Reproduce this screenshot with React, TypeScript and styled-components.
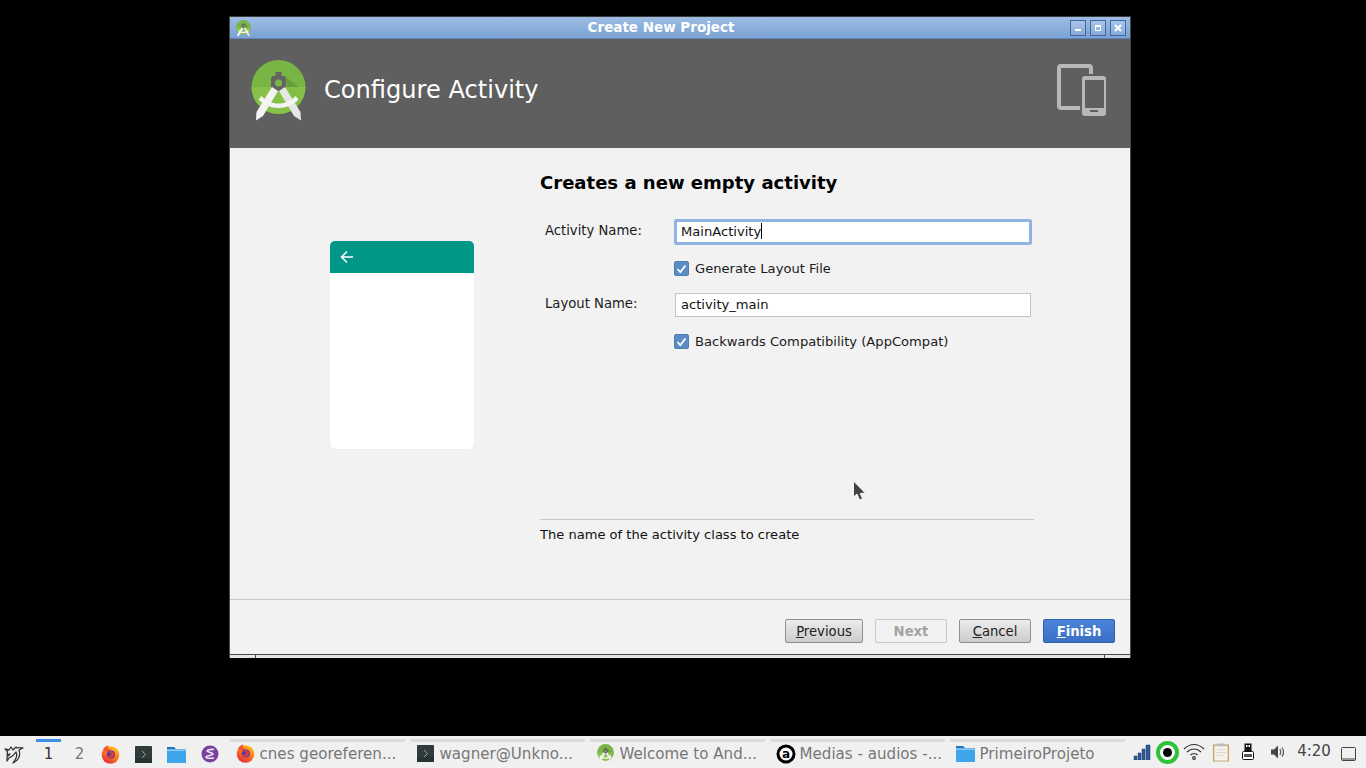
import React from 'react';
import styled, { createGlobalStyle } from 'styled-components';

const GlobalStyle = createGlobalStyle`
  html, body {
    margin: 0;
    padding: 0;
    height: 100%;
    background: #000;
    overflow: hidden;
    font-family: 'DejaVu Sans', sans-serif;
  }
  #root { height: 100%; }
`;

const Screen = styled.div`
  width: 1366px;
  height: 768px;
  display: flex;
  flex-direction: column;
  position: relative;
`;

const Desktop = styled.div`
  flex: 1;
  padding: 16px 0 0 229px;
`;

const Window = styled.div`
  width: 902px;
  height: 642px;
  box-sizing: border-box;
  display: flex;
  flex-direction: column;
  background: #f2f2f2;
  border-left: 1px solid #4a4a4a;
  border-right: 1px solid #4a4a4a;
  border-top: 1px solid #3a3a3a;
`;

const TitleBar = styled.div`
  height: 21px;
  flex: none;
  box-sizing: content-box;
  position: relative;
  display: flex;
  align-items: center;
  justify-content: center;
  background: linear-gradient(#9dbde4, #7ba2d3);
  border-bottom: 1px solid #5f86b8;
  color: #fff;
  font-size: 13.5px;
  font-weight: bold;
  line-height: 19px;
  padding-right: 38px;
`;

const TitleIcon = styled.div`
  position: absolute;
  left: 6px;
  top: 3px;
  line-height: 0;
`;

const TitleButtons = styled.div`
  position: absolute;
  right: 4px;
  top: 3px;
  display: flex;
  gap: 4px;
`;

const TitleButton = styled.div`
  width: 14px;
  height: 14px;
  border: 1px solid #40699e;
  background: linear-gradient(#a9c5e8, #86aad9);
  display: flex;
  align-items: center;
  justify-content: center;
  line-height: 0;
`;

const Banner = styled.div`
  height: 109px;
  flex: none;
  box-sizing: border-box;
  background: #5f5f5f;
  display: flex;
  align-items: flex-start;
  padding: 21px 24px 0 21px;
`;

const BannerTitle = styled.div`
  flex: 1;
  margin: 15px 0 0 18px;
  color: #fff;
  font-size: 24.1px;
  line-height: 30px;
`;

const DeviceArt = styled.svg`
  margin-top: 4px;
`;

const Body = styled.div`
  flex: 1;
  display: flex;
`;

const PreviewPane = styled.div`
  width: 310px;
  flex: none;
  box-sizing: border-box;
  padding: 93px 0 0 100px;
`;

const PreviewCard = styled.div`
  width: 144px;
  height: 208px;
  background: #fff;
  border-radius: 5px;
  overflow: hidden;
  box-shadow: 0 0 1px rgba(0, 0, 0, 0.08);
`;

const PreviewBar = styled.div`
  height: 32px;
  background: #009688;
  display: flex;
  align-items: center;
  padding-left: 10px;
  line-height: 0;
`;

const FormPane = styled.div`
  flex: 1;
  display: flex;
  flex-direction: column;
  padding-right: 96px;
  color: #1a1a1a;
  font-size: 13.1px;
`;

const Heading = styled.div`
  height: 22px;
  margin-top: 24px;
  line-height: 22px;
  font-size: 18.05px;
  font-weight: bold;
  color: #000;
`;

const Rows = styled.div`
  flex: 1;
  padding-top: 25px;
`;

const FieldRow = styled.div<{ $height: number }>`
  height: ${(p) => p.$height}px;
  display: flex;
  align-items: center;
  padding-left: 5px;
`;

const Label = styled.div`
  width: 129px;
  flex: none;
  margin-top: -3px;
  font-size: 13.2px;
`;

const FocusInput = styled.div`
  width: 358px;
  height: 26px;
  box-sizing: border-box;
  border: 3px solid #8fb3e3;
  border-radius: 2px;
  background: #fff;
  padding: 0 0 2px 4px;
  display: flex;
  align-items: center;
  color: #111;
`;

const Caret = styled.span`
  width: 1px;
  height: 16px;
  background: #000;
`;

const PlainInput = styled.div`
  width: 356px;
  height: 24px;
  margin-left: 1px;
  box-sizing: border-box;
  border: 1px solid #c4c4c4;
  background: #fff;
  padding: 0 0 2px 5px;
  display: flex;
  align-items: center;
  color: #111;
`;

const CheckRow = styled.div<{ $height: number; $inset?: number }>`
  height: ${(p) => p.$height}px;
  box-sizing: border-box;
  padding-bottom: ${(p) => p.$inset ?? 0}px;
  display: flex;
  align-items: center;
  gap: 6px;
  padding-left: 134px;
`;

const CheckBox = styled.div`
  width: 15px;
  height: 15px;
  box-sizing: border-box;
  background: #5b8cc4;
  border: 1px solid #4f7db3;
  border-radius: 2px;
  display: flex;
  align-items: center;
  justify-content: center;
  line-height: 0;
`;

const Description = styled.div`
  height: 80px;
  border-top: 1px solid #c8c8c8;
  box-sizing: border-box;
  padding-top: 7px;
  font-size: 13.05px;
  line-height: 15px;
  color: #111;
`;

const Footer = styled.div`
  height: 55px;
  flex: none;
  box-sizing: border-box;
  border-top: 1px solid #c9c9c9;
  display: flex;
  justify-content: flex-end;
  align-items: flex-start;
  gap: 12px;
  padding: 19px 15px 0 0;
`;

const Button = styled.div<{ $variant?: 'primary' | 'disabled'; $width: number }>`
  width: ${(p) => p.$width}px;
  height: 24px;
  box-sizing: border-box;
  display: flex;
  align-items: center;
  justify-content: center;
  font-size: 13.2px;
  border-radius: 2px;
  border: 1px solid ${(p) => (p.$variant === 'primary' ? '#2c62ad' : p.$variant === 'disabled' ? '#c8c8c8' : '#8f8f8f')};
  background: ${(p) =>
    p.$variant === 'primary'
      ? 'linear-gradient(#4a83d9, #3a70c4)'
      : p.$variant === 'disabled'
      ? '#f2f2f2'
      : 'linear-gradient(#ececec, #cbcbcb)'};
  color: ${(p) => (p.$variant === 'primary' ? '#fff' : p.$variant === 'disabled' ? '#a3a3a3' : '#222')};
  font-weight: ${(p) => (p.$variant ? 'bold' : 'normal')};
`;

const WindowBase = styled.div`
  height: 4px;
  flex: none;
  box-sizing: border-box;
  border-top: 1px solid #4a4a4a;
  background: #e6e6e6;
  position: relative;
  &::after {
    content: '';
    position: absolute;
    left: 25px;
    top: 0;
    width: 1px;
    height: 3px;
    background: #4a4a4a;
  }
  &::before {
    content: '';
    position: absolute;
    right: 25px;
    top: 0;
    width: 1px;
    height: 3px;
    background: #4a4a4a;
  }
`;

const Pointer = styled.div`
  position: absolute;
  left: 852px;
  top: 480px;
  line-height: 0;
`;

const Taskbar = styled.div`
  height: 32px;
  flex: none;
  background: #f0f0f0;
  display: flex;
`;

const Launcher = styled.div<{ $width: number }>`
  width: ${(p) => p.$width}px;
  flex: none;
  display: flex;
  align-items: center;
  justify-content: center;
  line-height: 0;
  padding-top: 4px;
  box-sizing: border-box;
`;

const Desk = styled.div<{ $active?: boolean }>`
  width: 25px;
  margin: 3px 0 0 ${(p) => (p.$active ? 8 : 6)}px;
  box-sizing: border-box;
  display: flex;
  align-items: center;
  justify-content: center;
  padding-bottom: 3px;
  font-size: 15px;
  color: ${(p) => (p.$active ? '#333' : '#777')};
  border-top: 3px solid ${(p) => (p.$active ? '#3d8ee6' : 'transparent')};
`;

const Launchers = styled.div`
  display: flex;
  margin-left: 2px;
`;

const Tasks = styled.div`
  display: flex;
  gap: 5px;
  margin-left: 4px;
`;

const Task = styled.div`
  width: 175px;
  margin-top: 3px;
  box-sizing: border-box;
  border-top: 3px solid #dcdcdc;
  display: flex;
  align-items: center;
  gap: 3.5px;
  padding: 0 0 3px 5px;
  font-size: 15.1px;
  color: #777;
  white-space: nowrap;
`;

const TaskIcon = styled.div`
  width: 21px;
  height: 20px;
  flex: none;
  display: flex;
  align-items: center;
  justify-content: center;
  line-height: 0;
`;

const Tray = styled.div`
  margin-left: auto;
  display: flex;
  align-items: center;
`;

const TrayItem = styled.div<{ $width: number; $drop?: number; $inset?: number }>`
  width: ${(p) => p.$width}px;
  flex: none;
  box-sizing: border-box;
  display: flex;
  align-items: center;
  justify-content: center;
  line-height: 0;
  margin-top: ${(p) => p.$drop ?? 0}px;
  padding-right: ${(p) => p.$inset ?? 0}px;
`;

const Clock = styled.div`
  width: 42px;
  flex: none;
  font-size: 15px;
  color: #444;
  text-align: center;
  line-height: 20px;
  margin-top: -2px;
`;

const AndroidLogo = ({ size }: { size: number }) => (
  <svg width={size} height={(size * 61) / 55} viewBox="0 0 55 61">
    <circle cx="27.5" cy="27" r="27" fill="#78b544" />
    <path d="M35 17L54 32 48 44 38 50z" fill="#669f38" />
    <path d="M.5 27h54a27 27 0 0 1-54 0z" fill="#8bc34a" opacity="0.85" />
    <path d="M24.5 12h6v4h3l1.500 2v9l-5 4h-5l-5-4v-9l1.500-2h3z" fill="#636363" />
    <circle cx="27.500" cy="23" r="3.600" fill="#7ab648" />
    <path d="M21 27l6 4-15 25-7 4.500.5-8.500z" fill="#f4f4f4" />
    <path d="M34 27l-6 4 15 25 7 4.500-.5-8.500z" fill="#e6e6e6" />
    <path d="M10.500 36c4.500 5 10.500 7.500 17 7.500s12.500-2.500 17-7.500l3 3.500c-5.500 5.500-12.500 8.500-20 8.500s-14.500-3-20-8.500z" fill="#f4f4f4" />
  </svg>
);

const FirefoxIcon = () => (
  <svg width="19" height="19" viewBox="0 0 20 20">
    <defs>
      <linearGradient id="ffBody" x1="0.8" y1="0" x2="0.2" y2="1">
        <stop offset="0" stopColor="#ffcb20" />
        <stop offset="0.45" stopColor="#ff7a1f" />
        <stop offset="1" stopColor="#e0263c" />
      </linearGradient>
    </defs>
    <circle cx="10" cy="10.500" r="9.300" fill="url(#ffBody)" />
    <path d="M2 5c1-2 3-4 6-4.500C7 2 7 3 7.500 4l3 1-2 2.500C6 8 4 7 2 5z" fill="#f5562a" />
    <circle cx="10.500" cy="10" r="4.200" fill="#4a3bb0" />
    <path d="M7 7.500c2-1.500 5-1.500 7 1 .5 3-1.500 5-4.500 5-2 0-3.500-1-4-2.500 2 1 5 .5 5-1.500C10.500 8 9 7.500 7 7.500z" fill="#e8402f" opacity="0.9" />
  </svg>
);

const TerminalIcon = () => (
  <svg width="17" height="17" viewBox="0 0 17 17">
    <rect width="17" height="17" rx="1" fill="#303c3c" />
    <rect y="12" width="17" height="5" fill="#263131" />
    <path d="M7 5l3.500 3.500L7 12" fill="none" stroke="#9aa4a4" strokeWidth="1" />
  </svg>
);

const FolderIcon = () => (
  <svg width="19" height="17" viewBox="0 0 19 17">
    <path d="M0 1h7l2 2h10v13H0z" fill="#1678c2" />
    <rect y="4" width="19" height="13" rx="0.5" fill="#3fa5ea" />
    <rect y="3.500" width="19" height="1" fill="#d6eefc" />
  </svg>
);

const EmacsIcon = () => (
  <svg width="18" height="18" viewBox="0 0 18 18">
    <circle cx="9" cy="9" r="8.500" fill="#7b3f9e" />
    <path d="M13 4.500C9 4 6 5 6 6s6 1.500 6 3-7 1.500-7 3 4 1.500 8 1" fill="none" stroke="#f2e6f7" strokeWidth="1.600" />
  </svg>
);

const BirdIcon = () => (
  <svg width="22" height="22" viewBox="0 0 22 22">
    <path
      d="M2 6l4 1 2-3 2 3 3-3 1 1c3-1 4 0 6 0l-4 2c1 3 1 6-1 9-1 2-3 3-5 4l2-3c2-3 2-6 1-8-2 3-4 5-7 6l-2 3 0-4 3-3-3 1c1-2 1-4-2-6z"
      fill="none"
      stroke="#333"
      strokeWidth="1.300"
      strokeLinejoin="round"
    />
  </svg>
);

const AudaciousIcon = () => (
  <svg width="20" height="20" viewBox="0 0 20 20">
    <circle cx="10" cy="10" r="8" fill="#fff" stroke="#000" strokeWidth="3" />
    <text x="10" y="14" textAnchor="middle" fontFamily="'DejaVu Sans', sans-serif" fontWeight="bold" fontSize="12" fill="#000">
      a
    </text>
  </svg>
);

const SignalIcon = () => (
  <svg width="18" height="16" viewBox="0 0 18 16">
    <path d="M1 12h3v4H1zM5 9h3v7H5zM9 5h3v11H9zM13 1h4v15h-4z" fill="#2f5a9a" stroke="#1f3a68" strokeWidth="0.500" />
  </svg>
);

const RecordIcon = () => (
  <svg width="23" height="23" viewBox="0 0 23 23">
    <circle cx="11.500" cy="11.500" r="9.500" fill="#fff" stroke="#2cc23a" strokeWidth="4" />
    <circle cx="11.500" cy="11.500" r="4.500" fill="#000" />
  </svg>
);

const WifiIcon = () => (
  <svg width="22" height="18" viewBox="0 0 22 18" fill="none" stroke="#333" strokeWidth="1.200">
    <path d="M1 6c6-6 14-6 20 0" />
    <path d="M4 9c4-4 10-4 14 0" />
    <path d="M7.500 12c2-2 5-2 7 0" />
    <circle cx="11" cy="15" r="1.300" />
  </svg>
);

const ClipboardIcon = () => (
  <svg width="18" height="19" viewBox="0 0 18 20">
    <rect x="0.500" y="1.500" width="17" height="18" fill="#c9a476" />
    <rect x="2" y="3" width="14" height="15.500" fill="#f5f2e8" />
    <rect x="5" y="0.500" width="8" height="3" fill="#b8bcc0" />
    <path d="M4 7h10M4 10h10M4 13h8" stroke="#d5d5d5" strokeWidth="1" />
  </svg>
);

const UsbIcon = () => (
  <svg width="12" height="18" viewBox="0 0 12 18">
    <rect x="2.500" y="0.500" width="7" height="8" fill="#111" />
    <path d="M4 2h1.500v2H4zM6.500 2H8v2H6.500z" fill="#fff" />
    <rect x="0.500" y="8.500" width="11" height="8" rx="1" fill="#fff" stroke="#111" />
    <rect x="2" y="11" width="8" height="3" fill="#555" />
  </svg>
);

const SoundIcon = () => (
  <svg width="16" height="16" viewBox="0 0 16 16">
    <path d="M1 5.500h3l4-4v13l-4-4H1z" fill="#444" />
    <path d="M10 5c1 2 1 4 0 6M12 3.500c2 3 2 6 0 9" fill="none" stroke="#555" strokeWidth="1.200" />
  </svg>
);

const ShowDesktopIcon = () => (
  <svg width="15" height="14" viewBox="0 0 15 14">
    <rect x="0.500" y="0.500" width="14" height="13" rx="1" fill="none" stroke="#444" />
    <rect x="1" y="11" width="13" height="2" fill="#999" />
  </svg>
);

const tasks = [
  { icon: <FirefoxIcon />, label: 'cnes georeferen...' },
  { icon: <TerminalIcon />, label: 'wagner@Unkno...' },
  { icon: <AndroidLogo size={17} />, label: 'Welcome to And...' },
  { icon: <AudaciousIcon />, label: 'Medias - audios -...' },
  { icon: <FolderIcon />, label: 'PrimeiroProjeto' },
];

const Check = () => (
  <svg width="11" height="10" viewBox="0 0 11 10">
    <path d="M1.500 5l2.800 3L9.500 1.500" fill="none" stroke="#fff" strokeWidth="1.800" />
  </svg>
);

const App = () => {
  return (
    <Screen>
      <GlobalStyle />
      <Desktop>
        <Window>
          <TitleBar>
            <TitleIcon>
              <AndroidLogo size={15} />
            </TitleIcon>
            Create New Project
            <TitleButtons>
              <TitleButton>
                <svg width="8" height="8" viewBox="0 0 8 8">
                  <rect x="1" y="5" width="6" height="2" fill="#fff" />
                </svg>
              </TitleButton>
              <TitleButton>
                <svg width="8" height="8" viewBox="0 0 8 8">
                  <rect x="1.500" y="1.500" width="5" height="5" fill="none" stroke="#fff" />
                  <rect x="1" y="1" width="6" height="2" fill="#fff" />
                </svg>
              </TitleButton>
              <TitleButton>
                <svg width="8" height="8" viewBox="0 0 8 8">
                  <path d="M1 1l6 6M7 1L1 7" stroke="#fff" strokeWidth="2" />
                </svg>
              </TitleButton>
            </TitleButtons>
          </TitleBar>
          <Banner>
            <AndroidLogo size={55} />
            <BannerTitle>Configure Activity</BannerTitle>
            <DeviceArt width="49" height="52" viewBox="0 0 49 52">
              <path d="M23 44H4a2 2 0 0 1-2-2V4a2 2 0 0 1 2-2h28a2 2 0 0 1 2 2v6" fill="none" stroke="#b8b8b8" strokeWidth="4" />
              <rect x="25" y="12" width="24" height="40" rx="3" fill="#b8b8b8" />
              <rect x="28" y="16" width="19" height="28" fill="#5f5f5f" />
              <rect x="33" y="46" width="8" height="2" fill="#5f5f5f" />
            </DeviceArt>
          </Banner>
          <Body>
            <PreviewPane>
              <PreviewCard>
                <PreviewBar>
                  <svg width="14" height="14" viewBox="0 0 14 14">
                    <path d="M13 7H2M7 1.500L1.500 7 7 12.500" fill="none" stroke="#fff" strokeWidth="1.500" />
                  </svg>
                </PreviewBar>
              </PreviewCard>
            </PreviewPane>
            <FormPane>
              <Heading>Creates a new empty activity</Heading>
              <Rows>
                <FieldRow $height={26}>
                  <Label>Activity Name:</Label>
                  <FocusInput>
                    MainActivity
                    <Caret />
                  </FocusInput>
                </FieldRow>
                <CheckRow $height={48} $inset={1}>
                  <CheckBox>
                    <Check />
                  </CheckBox>
                  Generate Layout File
                </CheckRow>
                <FieldRow $height={24}>
                  <Label>Layout Name:</Label>
                  <PlainInput>activity_main</PlainInput>
                </FieldRow>
                <CheckRow $height={49}>
                  <CheckBox>
                    <Check />
                  </CheckBox>
                  Backwards Compatibility (AppCompat)
                </CheckRow>
              </Rows>
              <Description>The name of the activity class to create</Description>
            </FormPane>
          </Body>
          <Footer>
            <Button $width={78}>
              <span>
                <u>P</u>revious
              </span>
            </Button>
            <Button $width={72} $variant="disabled">
              Next
            </Button>
            <Button $width={72}>
              <span>
                <u>C</u>ancel
              </span>
            </Button>
            <Button $width={72} $variant="primary">
              <span>
                <u>F</u>inish
              </span>
            </Button>
          </Footer>
          <WindowBase />
        </Window>
      </Desktop>
      <Taskbar>
        <Launcher $width={28}>
          <BirdIcon />
        </Launcher>
        <Desk $active>1</Desk>
        <Desk>2</Desk>
        <Launchers>
          <Launcher $width={33}>
            <FirefoxIcon />
          </Launcher>
          <Launcher $width={33}>
            <TerminalIcon />
          </Launcher>
          <Launcher $width={33}>
            <FolderIcon />
          </Launcher>
          <Launcher $width={33}>
            <EmacsIcon />
          </Launcher>
        </Launchers>
        <Tasks>
          {tasks.map((task) => (
            <Task key={task.label}>
              <TaskIcon>{task.icon}</TaskIcon>
              {task.label}
            </Task>
          ))}
        </Tasks>
        <Tray>
          <TrayItem $width={26}>
            <SignalIcon />
          </TrayItem>
          <TrayItem $width={24}>
            <RecordIcon />
          </TrayItem>
          <TrayItem $width={30}>
            <WifiIcon />
          </TrayItem>
          <TrayItem $width={24}>
            <ClipboardIcon />
          </TrayItem>
          <TrayItem $width={30}>
            <UsbIcon />
          </TrayItem>
          <TrayItem $width={30}>
            <SoundIcon />
          </TrayItem>
          <Clock>4:20</Clock>
          <TrayItem $width={31} $drop={4} $inset={5}>
            <ShowDesktopIcon />
          </TrayItem>
        </Tray>
      </Taskbar>
      <Pointer>
        <svg width="15" height="22" viewBox="0 0 15 22">
          <path d="M1.500 1v16l3.500-3 2.500 6 3-1.200-2.200-5.300 5-.5z" fill="#444" stroke="#f4f4f4" strokeWidth="1" />
        </svg>
      </Pointer>
    </Screen>
  );
};

export default App;
